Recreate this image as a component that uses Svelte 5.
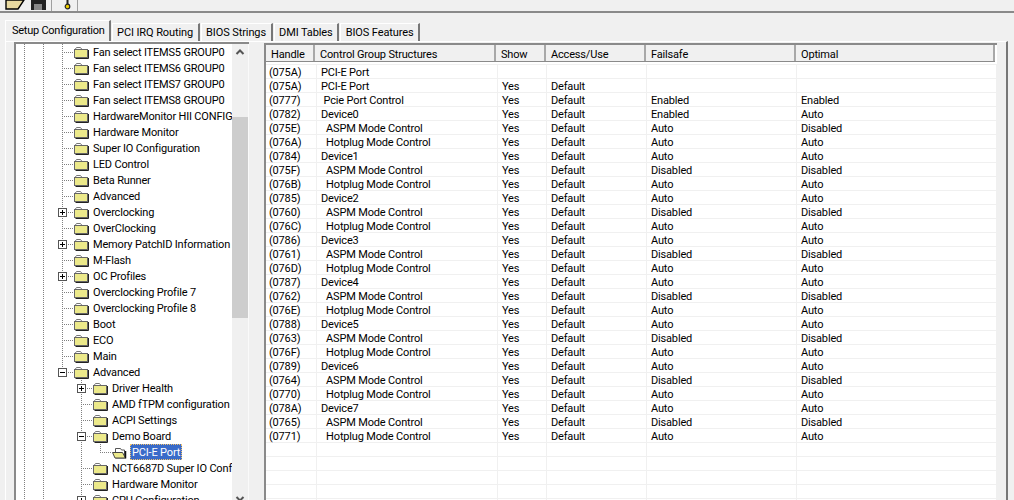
<script>
  // depth = nesting level, exp = expander sign, last = last child of its parent
  const tree = [
    { label: "Fan select ITEMS5 GROUP0", depth: 3 },
    { label: "Fan select ITEMS6 GROUP0", depth: 3 },
    { label: "Fan select ITEMS7 GROUP0", depth: 3 },
    { label: "Fan select ITEMS8 GROUP0", depth: 3 },
    { label: "HardwareMonitor HII CONFIG", depth: 3 },
    { label: "Hardware Monitor", depth: 3 },
    { label: "Super IO Configuration", depth: 3 },
    { label: "LED Control", depth: 3 },
    { label: "Beta Runner", depth: 3 },
    { label: "Advanced", depth: 3 },
    { label: "Overclocking", depth: 3, exp: "+" },
    { label: "OverClocking", depth: 3 },
    { label: "Memory PatchID Information", depth: 3, exp: "+" },
    { label: "M-Flash", depth: 3 },
    { label: "OC Profiles", depth: 3, exp: "+" },
    { label: "Overclocking Profile 7", depth: 3 },
    { label: "Overclocking Profile 8", depth: 3 },
    { label: "Boot", depth: 3 },
    { label: "ECO", depth: 3 },
    { label: "Main", depth: 3 },
    { label: "Advanced", depth: 3, exp: "-", last: true },
    { label: "Driver Health", depth: 4, exp: "+" },
    { label: "AMD fTPM configuration", depth: 4 },
    { label: "ACPI Settings", depth: 4 },
    { label: "Demo Board", depth: 4, exp: "-" },
    { label: "PCI-E Port", depth: 5, selected: true, last: true },
    { label: "NCT6687D Super IO Configuration", depth: 4 },
    { label: "Hardware Monitor", depth: 4 },
    { label: "CPU Configuration", depth: 4, exp: "+" }
  ];

  const tabs = ["Setup Configuration", "PCI IRQ Routing", "BIOS Strings", "DMI Tables", "BIOS Features"];
  const columns = ["Handle", "Control Group Structures", "Show", "Access/Use", "Failsafe", "Optimal"];

  const rows = [
    ["(075A)", "PCI-E Port", "", "", "", ""],
    ["(075A)", "PCI-E Port", "Yes", "Default", "", ""],
    ["(0777)", " Pcie Port Control", "Yes", "Default", "Enabled", "Enabled"],
    ["(0782)", "Device0", "Yes", "Default", "Enabled", "Auto"],
    ["(075E)", "  ASPM Mode Control", "Yes", "Default", "Auto", "Disabled"],
    ["(076A)", "  Hotplug Mode Control", "Yes", "Default", "Auto", "Auto"],
    ["(0784)", "Device1", "Yes", "Default", "Auto", "Auto"],
    ["(075F)", "  ASPM Mode Control", "Yes", "Default", "Disabled", "Disabled"],
    ["(076B)", "  Hotplug Mode Control", "Yes", "Default", "Auto", "Auto"],
    ["(0785)", "Device2", "Yes", "Default", "Auto", "Auto"],
    ["(0760)", "  ASPM Mode Control", "Yes", "Default", "Disabled", "Disabled"],
    ["(076C)", "  Hotplug Mode Control", "Yes", "Default", "Auto", "Auto"],
    ["(0786)", "Device3", "Yes", "Default", "Auto", "Auto"],
    ["(0761)", "  ASPM Mode Control", "Yes", "Default", "Disabled", "Disabled"],
    ["(076D)", "  Hotplug Mode Control", "Yes", "Default", "Auto", "Auto"],
    ["(0787)", "Device4", "Yes", "Default", "Auto", "Auto"],
    ["(0762)", "  ASPM Mode Control", "Yes", "Default", "Disabled", "Disabled"],
    ["(076E)", "  Hotplug Mode Control", "Yes", "Default", "Auto", "Auto"],
    ["(0788)", "Device5", "Yes", "Default", "Auto", "Auto"],
    ["(0763)", "  ASPM Mode Control", "Yes", "Default", "Disabled", "Disabled"],
    ["(076F)", "  Hotplug Mode Control", "Yes", "Default", "Auto", "Auto"],
    ["(0789)", "Device6", "Yes", "Default", "Auto", "Auto"],
    ["(0764)", "  ASPM Mode Control", "Yes", "Default", "Disabled", "Disabled"],
    ["(0770)", "  Hotplug Mode Control", "Yes", "Default", "Auto", "Auto"],
    ["(078A)", "Device7", "Yes", "Default", "Auto", "Auto"],
    ["(0765)", "  ASPM Mode Control", "Yes", "Default", "Disabled", "Disabled"],
    ["(0771)", "  Hotplug Mode Control", "Yes", "Default", "Auto", "Auto"],
    ["", "", "", "", "", ""],
    ["", "", "", "", "", ""],
    ["", "", "", "", "", ""],
    ["", "", "", "", "", ""],
    ["", "", "", "", "", ""]
  ];
</script>

<div class="window">
  <div class="toolbar">
    <svg class="open" width="20" height="11" viewBox="0 0 20 11">
      <path d="M1 0v9h12l6-9z" fill="#e8d9a0" stroke="#000" stroke-width="1.4" />
    </svg>
    <svg class="save" width="15" height="11" viewBox="0 0 15 11">
      <rect x="0" y="0" width="15" height="10" fill="#222" />
      <rect x="3" y="4" width="8" height="6" fill="#888" />
    </svg>
    <span class="sep first"></span>
    <svg class="key" width="7" height="11" viewBox="0 0 7 11">
      <circle cx="3.500" cy="6.500" r="2.300" fill="#f0d000" stroke="#222" stroke-width="1.200" />
      <rect x="2.500" y="0" width="2" height="4" fill="#222" />
    </svg>
    <span class="sep"></span>
  </div>

  <div class="tabs">
    {#each tabs as tab, i}
      <div class="tab" class:active={i === 0}>{tab}</div>
    {/each}
  </div>

  <div class="pane">
    <div class="tree">
      <div class="tree-rows">
        {#each tree as node}
          <div class="node">
            {#each Array(node.depth - 1) as _, d}
              <span class="guide" class:blank={d === 2}></span>
            {/each}
            <span class="branch" class:last={node.last}>
              {#if node.exp}
                <span class="expander">
                  <i class="bar"></i>
                  {#if node.exp === "+"}<i class="bar vert"></i>{/if}
                </span>
              {/if}
            </span>
            {#if node.selected}
              <svg class="folder tight" width="15" height="14" viewBox="0 0 15 14">
                <path d="M3.500 3.500h5l1 1.500h3v8h-9z" fill="#fff" stroke="#555" />
                <path d="M.5 7.500h10l3 5.500h-10.500z" fill="#ece98a" stroke="#444" />
                <path d="M13.500 6v7.500" stroke="#111" stroke-width="1.500" />
              </svg>
            {:else}
              <svg class="folder" width="15" height="14" viewBox="0 0 15 14">
                <path d="M1 4.500l1.500-2h4l1.500 2h6" fill="#fff" stroke="#777" />
                <rect x=".5" y="4.500" width="13" height="8" fill="#ece98a" stroke="#666" />
                <path d="M14.500 5v8.500h-13" fill="none" stroke="#222" />
              </svg>
            {/if}
            <span class="label" class:selected={node.selected}>{node.label}</span>
          </div>
        {/each}
      </div>
      <div class="scrollbar">
        <svg class="arrow" width="16" height="16" viewBox="0 0 16 16">
          <path d="M4.500 10L8 6.500 11.500 10" fill="none" stroke="#555" stroke-width="2" />
        </svg>
        <div class="thumb"></div>
        <svg class="arrow down" width="16" height="16" viewBox="0 0 16 16">
          <path d="M4.500 6L8 9.500 11.500 6" fill="none" stroke="#555" stroke-width="2" />
        </svg>
      </div>
    </div>

    <div class="list">
      <div class="grid head">
        {#each columns as col}
          <div class="hcell">{col}</div>
        {/each}
      </div>
      <div class="rows">
        {#each rows as row}
          <div class="grid row">
            {#each row as cell}
              <div class="cell">{cell}</div>
            {/each}
          </div>
        {/each}
      </div>
    </div>
  </div>
</div>

<style>
  :global(body) {
    background: #f0f0f0;
    font-family: Roboto, "Liberation Sans", sans-serif;
    font-size: 11px;
    letter-spacing: -0.17px;
    color: #000;
  }

  .window {
    width: 1014px;
    height: 500px;
    overflow: hidden;
    background: #f0f0f0;
  }

  .toolbar {
    height: 11px;
    display: flex;
    align-items: flex-start;
    padding-left: 5px;
    border-bottom: 2px solid #8a8a8a;
  }

  .toolbar svg {
    flex: none;
  }

  .save {
    margin-left: 6px;
  }

  .key {
    margin-left: 12px;
  }

  .sep {
    width: 1px;
    height: 11px;
    background: #a0a0a0;
    margin-left: 6px;
  }

  .sep.first {
    margin-left: 5px;
  }

  .tabs {
    display: flex;
    align-items: flex-end;
    height: 28px;
    margin-left: 5px;
  }

  .tab {
    height: 17px;
    line-height: 17px;
    padding: 0 4.500px;
    margin-right: 1px;
    letter-spacing: -0.1px;
    background: #f0f0f0;
    border-top: 1px solid #fff;
    border-left: 1px solid #fff;
    border-right: 2px solid #777;
    white-space: pre;
  }

  .tab.active {
    height: 20px;
    padding: 0 4px 0 6px;
    line-height: 20px;
    letter-spacing: -0.25px;
  }

  .pane {
    display: flex;
    align-items: flex-start;
    width: 1003px;
    height: 470px;
    margin-left: 5px;
    box-sizing: border-box;
    border-left: 1px solid #fff;
    border-top: 1px solid #fff;
    border-right: 2px solid #777;
    padding: 0 0 0 8px;
    gap: 15px;
  }

  .tree {
    display: flex;
    width: 235px;
    height: 465px;
    box-sizing: border-box;
    border-left: 2px solid #8a8a8a;
    border-top: 2px solid #8a8a8a;
    background: #fff;
    flex: none;
  }

  .tree-rows {
    width: 216px;
    overflow: hidden;
    flex: none;
  }

  .node {
    display: flex;
    height: 16px;
    padding-left: 8px;
    white-space: pre;
  }

  .guide {
    width: 19px;
    flex: none;
    background: repeating-linear-gradient(to bottom, #808080 0 1px, transparent 1px 2px) left / 1px 100% no-repeat;
  }

  .guide.blank {
    background: none;
  }

  .branch {
    position: relative;
    width: 12px;
    flex: none;
    background:
      repeating-linear-gradient(to bottom, #808080 0 1px, transparent 1px 2px) left / 1px 100% no-repeat,
      repeating-linear-gradient(to right, #808080 0 1px, transparent 1px 2px) left center / 100% 1px no-repeat;
  }

  .branch.last {
    background:
      repeating-linear-gradient(to bottom, #808080 0 1px, transparent 1px 2px) left top / 1px 50% no-repeat,
      repeating-linear-gradient(to right, #808080 0 1px, transparent 1px 2px) left center / 100% 1px no-repeat;
  }

  .expander {
    position: absolute;
    left: -4px;
    top: 4px;
    width: 9px;
    height: 9px;
    box-sizing: border-box;
    border: 1px solid #555;
    background: #fff;
  }

  .bar {
    position: absolute;
    left: 1px;
    top: 3px;
    width: 5px;
    height: 1px;
    background: #000;
  }

  .bar.vert {
    left: 3px;
    top: 1px;
    width: 1px;
    height: 5px;
  }

  .folder {
    flex: none;
    margin-top: 1px;
    margin-right: 4px;
  }

  .folder.tight {
    margin-right: 3px;
  }

  .label {
    line-height: 18px;
  }

  .label.selected {
    background: #3a6bc9;
    color: #fff;
    padding: 0 2px;
    outline: 1px dotted #f2c26b;
    outline-offset: -1px;
  }

  .scrollbar {
    display: flex;
    flex-direction: column;
    width: 16px;
    height: 100%;
    border-right: 1px solid #fafafa;
    background: #f0f0f0;
    flex: none;
  }

  .arrow {
    flex: none;
  }

  .thumb {
    width: 16px;
    height: 201px;
    margin-top: 57px;
    background: #cdcdcd;
    flex: none;
  }

  .down {
    margin-top: auto;
  }

  .list {
    width: 733px;
    height: 470px;
    margin-top: 1px;
    box-sizing: border-box;
    border-left: 2px solid #8a8a8a;
    border-top: 2px solid #8a8a8a;
    background: #fff;
    flex: none;
    overflow: hidden;
  }

  .grid {
    display: grid;
    grid-template-columns: 51px 181px 49px 100px 150px 200px;
  }

  .head {
    grid-template-columns: 49px 181px 50px 100px 150px 199px;
    width: 729px;
    height: 16px;
    background: #f0f0f0;
    border-bottom: 1px solid #8a8a8a;
  }

  .hcell {
    height: 16px;
    line-height: 20px;
    padding-left: 5px;
    border-right: 2px solid #a8a8a8;
  }

  .rows {
    margin-top: 2px;
    border-top: 1px solid #f0f0f0;
  }

  .row {
    height: 14px;
    box-sizing: border-box;
    border-bottom: 1px solid #f0f0f0;
  }

  .cell {
    line-height: 16px;
    height: 13px;
    padding-left: 4px;
    border-right: 1px solid #f0f0f0;
    white-space: pre;
  }

  .cell:first-child {
    padding-left: 3px;
  }
</style>
